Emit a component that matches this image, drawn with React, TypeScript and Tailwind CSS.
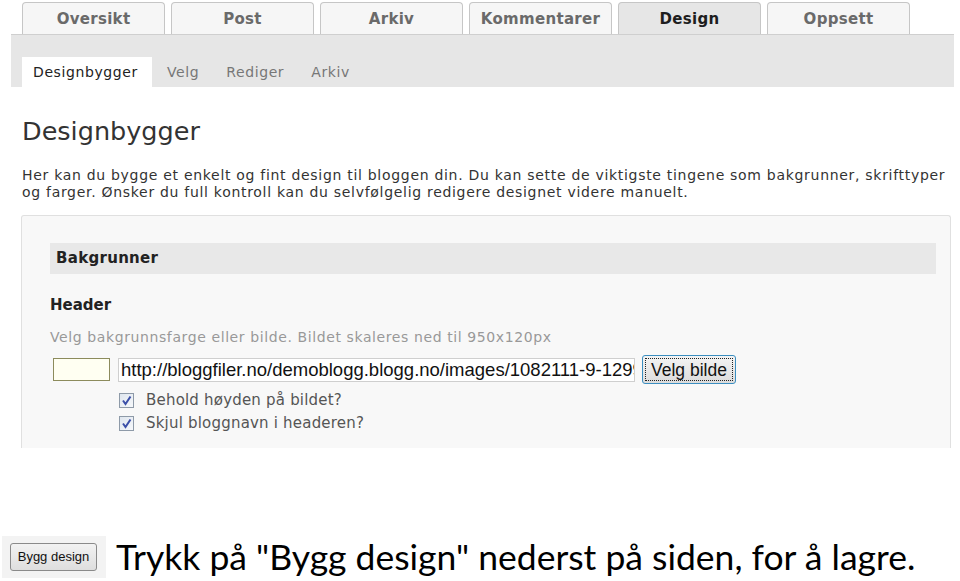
import React from "react";

const mainTabs = ["Oversikt", "Post", "Arkiv", "Kommentarer", "Design", "Oppsett"];
const subTabs = ["Designbygger", "Velg", "Rediger", "Arkiv"];

function Check({ label }: { label: string }) {
  return (
    <div className="flex items-center h-[23px]">
      <span className="w-[15px] h-[15px] border border-[#8e9aa8] bg-gradient-to-br from-[#dfe6ee] to-[#f6f8fb] flex items-center justify-center">
        <svg width="11" height="11" viewBox="0 0 11 11">
          <path d="M2 5.5 L4.5 9 L9.5 1.5" fill="none" stroke="#3b4fa8" strokeWidth="2" />
        </svg>
      </span>
      <span className="ml-[12px] text-[15px] tracking-[0.2px] text-[#555]">{label}</span>
    </div>
  );
}

export default function App() {
  return (
    <div className="w-[960px] h-[581px] bg-white overflow-hidden font-['DejaVu_Sans',sans-serif] relative">
      {/* MAIN TABS */}
      <div className="flex gap-[6px] pl-[22px] pt-[2px] h-[34px]">
        {mainTabs.map((t) => (
          <div
            key={t}
            className={`w-[143px] h-[32px] border border-b-0 border-[#c6c6c6] rounded-t-[4px] flex items-center justify-center pt-[2px] text-[15px] tracking-[0.3px] font-bold ${
              t === "Design" ? "bg-[#e6e6e6] text-[#1e1e1e]" : "bg-[#f6f6f6] text-[#6a6a6a]"
            }`}
          >
            {t}
          </div>
        ))}
      </div>

      {/* SUB BAR */}
      <div className="ml-[11px] w-[943px] h-[53px] bg-[#e6e6e6] border-t border-[#cfcfcf] flex items-end pl-[11px]">
        {subTabs.map((t, i) => (
          <div
            key={t + i}
            className={`h-[30px] flex items-center text-[14px] tracking-[0.6px] ${
              i === 0
                ? "bg-white text-[#222] pl-[11px] w-[130px]"
                : i === 1
                  ? "text-[#777] ml-[15px]"
                  : "text-[#777] ml-[27px]"
            }`}
          >
            {t}
          </div>
        ))}
      </div>

      {/* HEADING */}
      <div className="pl-[22px] pt-[29px]">
        <h1 className="text-[25.5px] leading-[30px] text-[#333]">Designbygger</h1>
        <p className="mt-[21px] text-[14px] tracking-[0.7px] leading-[17px] text-[#333] whitespace-nowrap">
          Her kan du bygge et enkelt og fint design til bloggen din. Du kan sette de viktigste tingene som bakgrunner, skrifttyper
          <br />
          og farger. Ønsker du full kontroll kan du selvfølgelig redigere designet videre manuelt.
        </p>
      </div>

      {/* PANEL */}
      <div className="ml-[21px] mt-[14px] w-[930px] h-[233px] overflow-hidden border border-b-0 border-[#e0e0e0] rounded-t-[3px] bg-[#f8f8f8] pl-[28px] pr-[14px] pt-[27px]">
        <div className="h-[31px] bg-[#e8e8e8] flex items-center pl-[6px] text-[15px] tracking-[0.3px] font-bold text-[#222]">
          Bakgrunner
        </div>
        <div className="mt-[22px] text-[15px] font-bold text-[#222] leading-[18px]">Header</div>
        <div className="mt-[15px] text-[14px] tracking-[0.6px] text-[#999] leading-[16px] whitespace-nowrap">
          Velg bakgrunnsfarge eller bilde. Bildet skaleres ned til 950x120px
        </div>
        <div className="flex items-center mt-[10px] h-[29px]">
          <div className="ml-[3px] w-[57px] h-[23px] border border-[#8c8b5c] bg-[#fffff2]" />
          <div className="ml-[8px] w-[517px] h-[24px] border border-[#cfcfcf] bg-white overflow-hidden whitespace-nowrap font-['Liberation_Sans',sans-serif] text-[18.5px] leading-[22px] text-[#111] pl-[2px]">
            http://bloggfiler.no/demoblogg.blogg.no/images/1082111-9-1299
          </div>
          <div className="ml-[7px] w-[94px] h-[29px] rounded-[3px] border border-[#3b8ec0] bg-gradient-to-b from-[#f4f4f4] to-[#dcdcdc] p-[2px]">
            <div className="w-full h-full border border-dotted border-[#222] flex items-center justify-center font-['Liberation_Sans',sans-serif] text-[17.5px] leading-[20px] text-[#111]">
              Velg bilde
            </div>
          </div>
        </div>
        <div className="ml-[69px] mt-[5px]">
          <Check label="Behold høyden på bildet?" />
          <Check label="Skjul bloggnavn i headeren?" />
        </div>
      </div>

      {/* BOTTOM NOTE */}
      <div className="absolute left-0 top-[536px] flex items-center">
        <div className="ml-[2px] w-[104px] h-[42px] bg-[#f3f3f3] flex items-center pl-[8px]">
          <div className="w-[87px] h-[28px] rounded-[3px] border border-[#8a8a8a] bg-gradient-to-b from-[#f2f2f2] to-[#dedede] flex items-center justify-center font-['Liberation_Sans',sans-serif] text-[13px] text-[#111]">
            Bygg design
          </div>
        </div>
        <div className="ml-[10px] font-['Lato',sans-serif] text-[35.5px] leading-[42px] text-black whitespace-nowrap">
          Trykk på "Bygg design" nederst på siden, for å lagre.
        </div>
      </div>
    </div>
  );
}
